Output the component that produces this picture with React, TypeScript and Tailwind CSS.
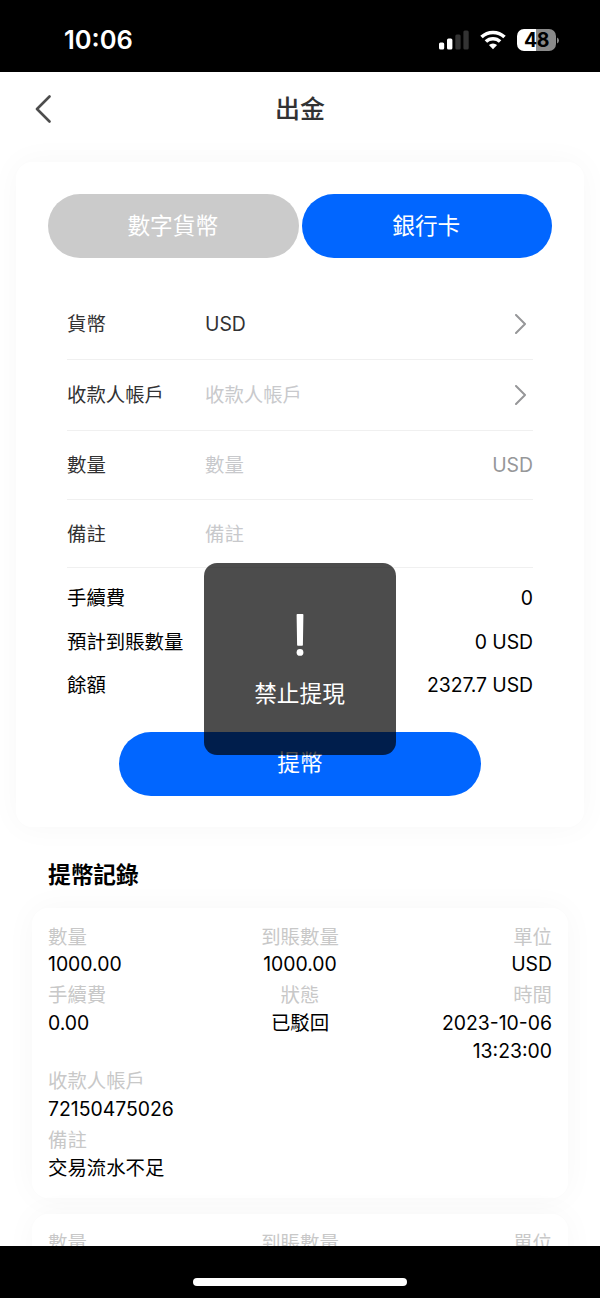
import type { ReactNode } from 'react';

const FORM_ROWS = [
  { label: '貨幣', value: 'USD', filled: true, arrow: true, height: 'h-[71px]' },
  { label: '收款人帳戶', value: '收款人帳戶', filled: false, arrow: true, height: 'h-[71px]' },
  { label: '數量', value: '數量', filled: false, unit: 'USD', height: 'h-[69px]' },
  { label: '備註', value: '備註', filled: false, height: 'h-[68px]' },
];

const SUMMARY = [
  { label: '手續費', value: '0' },
  { label: '預計到賬數量', value: '0 USD' },
  { label: '餘額', value: '2327.7 USD' },
];

function StatusBar() {
  return (
    <div className="flex h-[72px] shrink-0 items-center bg-black pl-16 pr-[41px] pt-2 text-white">
      <span className="text-[25.5px] font-semibold leading-none">10:06</span>
      <div className="ml-auto flex items-center">
        <svg width="31" height="20" viewBox="0 0 31 20" className="mr-[11px]">
          <rect x="1" y="12.5" width="5.2" height="7" rx="1.5" fill="#fff" />
          <rect x="9" y="8.5" width="5.4" height="11" rx="1.5" fill="#fff" />
          <rect x="17.3" y="4.5" width="5.3" height="15" rx="1.5" fill="#333" />
          <rect x="25.4" y="0.5" width="5.3" height="19" rx="1.5" fill="#333" />
        </svg>
        <svg width="26" height="20" viewBox="0 0 26 20" className="mr-[11px]" fill="none" stroke="#fff" strokeWidth="3.5">
          <path d="M1.5 7.1a16.4 16.4 0 0 1 23 0" />
          <path d="M5.9 11.6a10.1 10.1 0 0 1 14.2 0" />
          <path d="M13 19.3l-4.1-4.2a5.9 5.9 0 0 1 8.2 0z" fill="#fff" stroke="none" />
        </svg>
        <div className="flex h-[22px] w-[39px] items-center justify-center rounded-[7px] bg-[linear-gradient(to_right,#fff_19px,#8a8a8a_19px)] pt-0.5 text-[19.5px] font-bold leading-none tracking-[-0.4px] text-black">
          48
        </div>
        <svg width="2" height="7" viewBox="0 0 2 7" className="ml-px">
          <path d="M0 0.5q2 1 2 3t-2 3z" fill="#8a8a8a" />
        </svg>
      </div>
    </div>
  );
}

function Arrow() {
  return (
    <svg width="12" height="20" viewBox="0 0 12 20" className="mb-[3px] mr-[6px]" fill="none" stroke="#969799" strokeWidth="2" strokeLinecap="round" strokeLinejoin="round">
      <path d="M1 1L10 10L1 19" />
    </svg>
  );
}

function Cell({ label, className = '', children }: { label: string; className?: string; children?: ReactNode }) {
  return (
    <div className={`leading-[27.7px] ${className}`}>
      <div className="text-[#c8c8c8]">{label}</div>
      <div>{children}</div>
    </div>
  );
}

export default function App() {
  return (
    <div className="flex h-[1298px] w-[600px] flex-col overflow-hidden bg-white font-['Inter','Noto_Sans_CJK_TC',sans-serif] text-[19.4px] font-[370] text-black">
      <StatusBar />

      <main className="relative h-[1173.5px] shrink-0 overflow-hidden">
        <header className="flex h-[74px] items-center px-[35px]">
          <svg width="17" height="28" viewBox="0 0 17 28" fill="none" stroke="#4d4d4d" strokeWidth="2.6" strokeLinecap="round" strokeLinejoin="round">
            <path d="M14.5 1.5L2 14L14.5 26.5" />
          </svg>
          <h1 className="flex-1 pr-[17px] pt-px text-center text-[25px] font-medium text-[#323233]">出金</h1>
        </header>

        <section className="mx-4 mt-4 h-[665px] rounded-2xl bg-white px-8 pt-8 shadow-[0_0_32px_rgba(0,0,0,0.035)]">
          <div className="flex gap-[3px] text-[22.7px] text-white">
            <button className="h-16 flex-1 rounded-full bg-[#cbcbcb] pr-px">數字貨幣</button>
            <button className="h-16 flex-1 rounded-full bg-[#0166ff] pr-px">銀行卡</button>
          </div>

          <div className="mt-[31px] px-[19px]">
            {FORM_ROWS.map((row) => (
              <div key={row.label} className={`flex items-center border-b border-[#f0f0f0] pt-[2px] ${row.height}`}>
                <span className="w-[138px] text-[#323233]">{row.label}</span>
                <span className={row.filled ? 'text-[#323233]' : 'text-[#c8c9cc]'}>{row.value}</span>
                <span className="ml-auto text-[#969799]">
                  {row.arrow ? <Arrow /> : row.unit}
                </span>
              </div>
            ))}
          </div>

          <div className="px-[19px] pt-[9px]">
            {SUMMARY.map((item) => (
              <div key={item.label} className="flex h-[43.6px] items-center justify-between">
                <span>{item.label}</span>
                <span className="tracking-[-0.08px]">{item.value}</span>
              </div>
            ))}
          </div>

          <button className="mx-auto mt-[24px] block h-16 w-[362px] rounded-full bg-[#0166ff] pb-px text-[22.7px] text-white">提幣</button>
        </section>

        <h2 className="ml-12 mt-[31px] text-[22.7px] font-bold leading-[34px]">提幣記錄</h2>

        <section className="mx-8 mt-4 h-[290px] rounded-2xl bg-white px-4 pt-[15.5px] shadow-[0_0_32px_rgba(0,0,0,0.035)]">
          <div className="grid grid-cols-3 gap-y-[3.2px]">
            <Cell label="數量">1000.00</Cell>
            <Cell label="到賬數量" className="text-center">1000.00</Cell>
            <Cell label="單位" className="text-right">USD</Cell>
            <Cell label="手續費">0.00</Cell>
            <Cell label="狀態" className="text-center">已駁回</Cell>
            <Cell label="時間" className="text-right">2023-10-06 13:23:00</Cell>
            <Cell label="收款人帳戶" className="col-span-3">72150475026</Cell>
            <Cell label="備註" className="col-span-3">交易流水不足</Cell>
          </div>
        </section>

        <section className="mx-8 mt-4 h-[290px] rounded-2xl bg-white px-4 pt-[15.5px] shadow-[0_0_32px_rgba(0,0,0,0.035)]">
          <div className="grid grid-cols-3">
            <Cell label="數量" />
            <Cell label="到賬數量" className="text-center" />
            <Cell label="單位" className="text-right" />
          </div>
        </section>

        {/* Toast */}
        <div className="absolute left-1/2 top-1/2 flex h-48 w-48 -translate-x-1/2 -translate-y-1/2 flex-col items-center rounded-[13px] bg-black/70 pr-px pt-[51px] text-white">
          <svg width="8" height="42" viewBox="0 0 8 42" fill="#fff">
            <path d="M0.6 0.8q0-.8.8-.8h5.2q.8 0 .8.8L6.9 31q0 .8-.8.8H1.9q-.8 0-.8-.8z" />
            <circle cx="4" cy="38.4" r="3.4" />
          </svg>
          <p className="mt-[22px] text-[22.7px] leading-[32px]">禁止提現</p>
        </div>
      </main>

      <footer className="flex flex-1 justify-center bg-black pt-8">
        <div className="h-2 w-[214px] rounded-full bg-white" />
      </footer>
    </div>
  );
}
